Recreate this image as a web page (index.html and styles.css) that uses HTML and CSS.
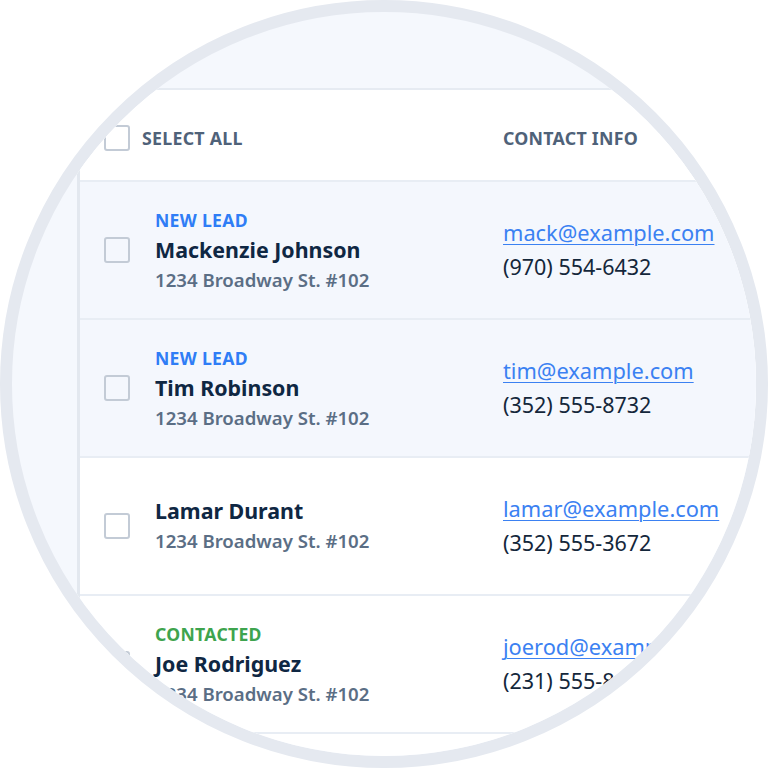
FILE: index.html
```html
<!DOCTYPE html>
<html lang="en">
<head>
<meta charset="utf-8">
<title>Contacts</title>
<link rel="stylesheet" href="styles.css">
</head>
<body>
<div class="lens">
  <div class="panel">
    <div class="row head">
      <div class="cell-main">
        <span class="box"></span>
        <span class="head-label">SELECT ALL</span>
      </div>
      <div class="cell-contact">
        <span class="head-label">CONTACT INFO</span>
      </div>
    </div>
    <div class="row tinted">
      <div class="cell-main">
        <span class="box"></span>
        <div class="info">
          <div class="status new">NEW LEAD</div>
          <div class="name">Mackenzie Johnson</div>
          <div class="addr">1234 Broadway St. #102</div>
        </div>
      </div>
      <div class="cell-contact">
        <a class="email" href="#">mack@example.com</a>
        <div class="phone">(970) 554-6432</div>
      </div>
    </div>
    <div class="row tinted">
      <div class="cell-main">
        <span class="box"></span>
        <div class="info">
          <div class="status new">NEW LEAD</div>
          <div class="name">Tim Robinson</div>
          <div class="addr">1234 Broadway St. #102</div>
        </div>
      </div>
      <div class="cell-contact">
        <a class="email" href="#">tim@example.com</a>
        <div class="phone">(352) 555-8732</div>
      </div>
    </div>
    <div class="row">
      <div class="cell-main">
        <span class="box"></span>
        <div class="info">
          <div class="name">Lamar Durant</div>
          <div class="addr">1234 Broadway St. #102</div>
        </div>
      </div>
      <div class="cell-contact">
        <a class="email" href="#">lamar@example.com</a>
        <div class="phone">(352) 555-3672</div>
      </div>
    </div>
    <div class="row">
      <div class="cell-main">
        <span class="box"></span>
        <div class="info">
          <div class="status done">CONTACTED</div>
          <div class="name">Joe Rodriguez</div>
          <div class="addr">1234 Broadway St. #102</div>
        </div>
      </div>
      <div class="cell-contact">
        <a class="email" href="#">joerod@example.com</a>
        <div class="phone">(231) 555-8190</div>
      </div>
    </div>
    <div class="row"></div>
  </div>
</div>
</body>
</html>
```
FILE: styles.css
```css
html, body {
  margin: 0;
  padding: 0;
  background: #ffffff;
}
body {
  font-family: "Noto Sans", "Open Sans", sans-serif;
}
.lens {
  width: 768px;
  height: 768px;
  box-sizing: border-box;
  border: 12px solid #e5e9f0;
  border-radius: 50%;
  overflow: hidden;
  background: #f5f8fd;
  padding: 76px 0 0 65px;
}
.panel {
  width: 820px;
  background: #ffffff;
  border-left: 3px solid #e3e8ef;
  border-top: 2px solid #e6ebf2;
}
.row {
  display: flex;
  align-items: center;
  height: 136px;
  border-bottom: 2px solid #e8edf4;
  box-sizing: content-box;
}
.row.head {
  height: 84px;
  padding-top: 6px;
  background: #ffffff;
}
.row.tinted {
  background: #f4f7fd;
}
.cell-main {
  display: flex;
  align-items: center;
  width: 423px;
  padding-left: 24px;
  box-sizing: border-box;
}
.head .cell-main {
  gap: 12px;
}
.cell-contact {
  display: flex;
  flex-direction: column;
}
.box {
  width: 22px;
  height: 22px;
  border: 2px solid #c3cbd6;
  border-radius: 3px;
  flex: none;
}
.info {
  margin-left: 25px;
  display: flex;
  flex-direction: column;
}
.head-label {
  font-size: 17.8px;
  font-weight: 700;
  letter-spacing: 0.25px;
  color: #4f6279;
}
.status {
  font-size: 17.6px;
  font-weight: 700;
  letter-spacing: 0.3px;
  line-height: 29px;
}
.status.new { color: #2f7df6; }
.status.done { color: #3ea44e; }
.name {
  font-size: 21.4px;
  font-weight: 700;
  line-height: 30px;
  color: #0f2743;
}
.addr {
  font-size: 18.6px;
  font-weight: 600;
  line-height: 30px;
  color: #5b6e85;
}
.email {
  font-size: 21.8px;
  line-height: 34px;
  color: #3b81f2;
  text-decoration: underline;
  text-underline-offset: 3px;
  text-decoration-thickness: 1px;
}
.phone {
  font-size: 21.5px;
  line-height: 34px;
  color: #14273b;
}
```
